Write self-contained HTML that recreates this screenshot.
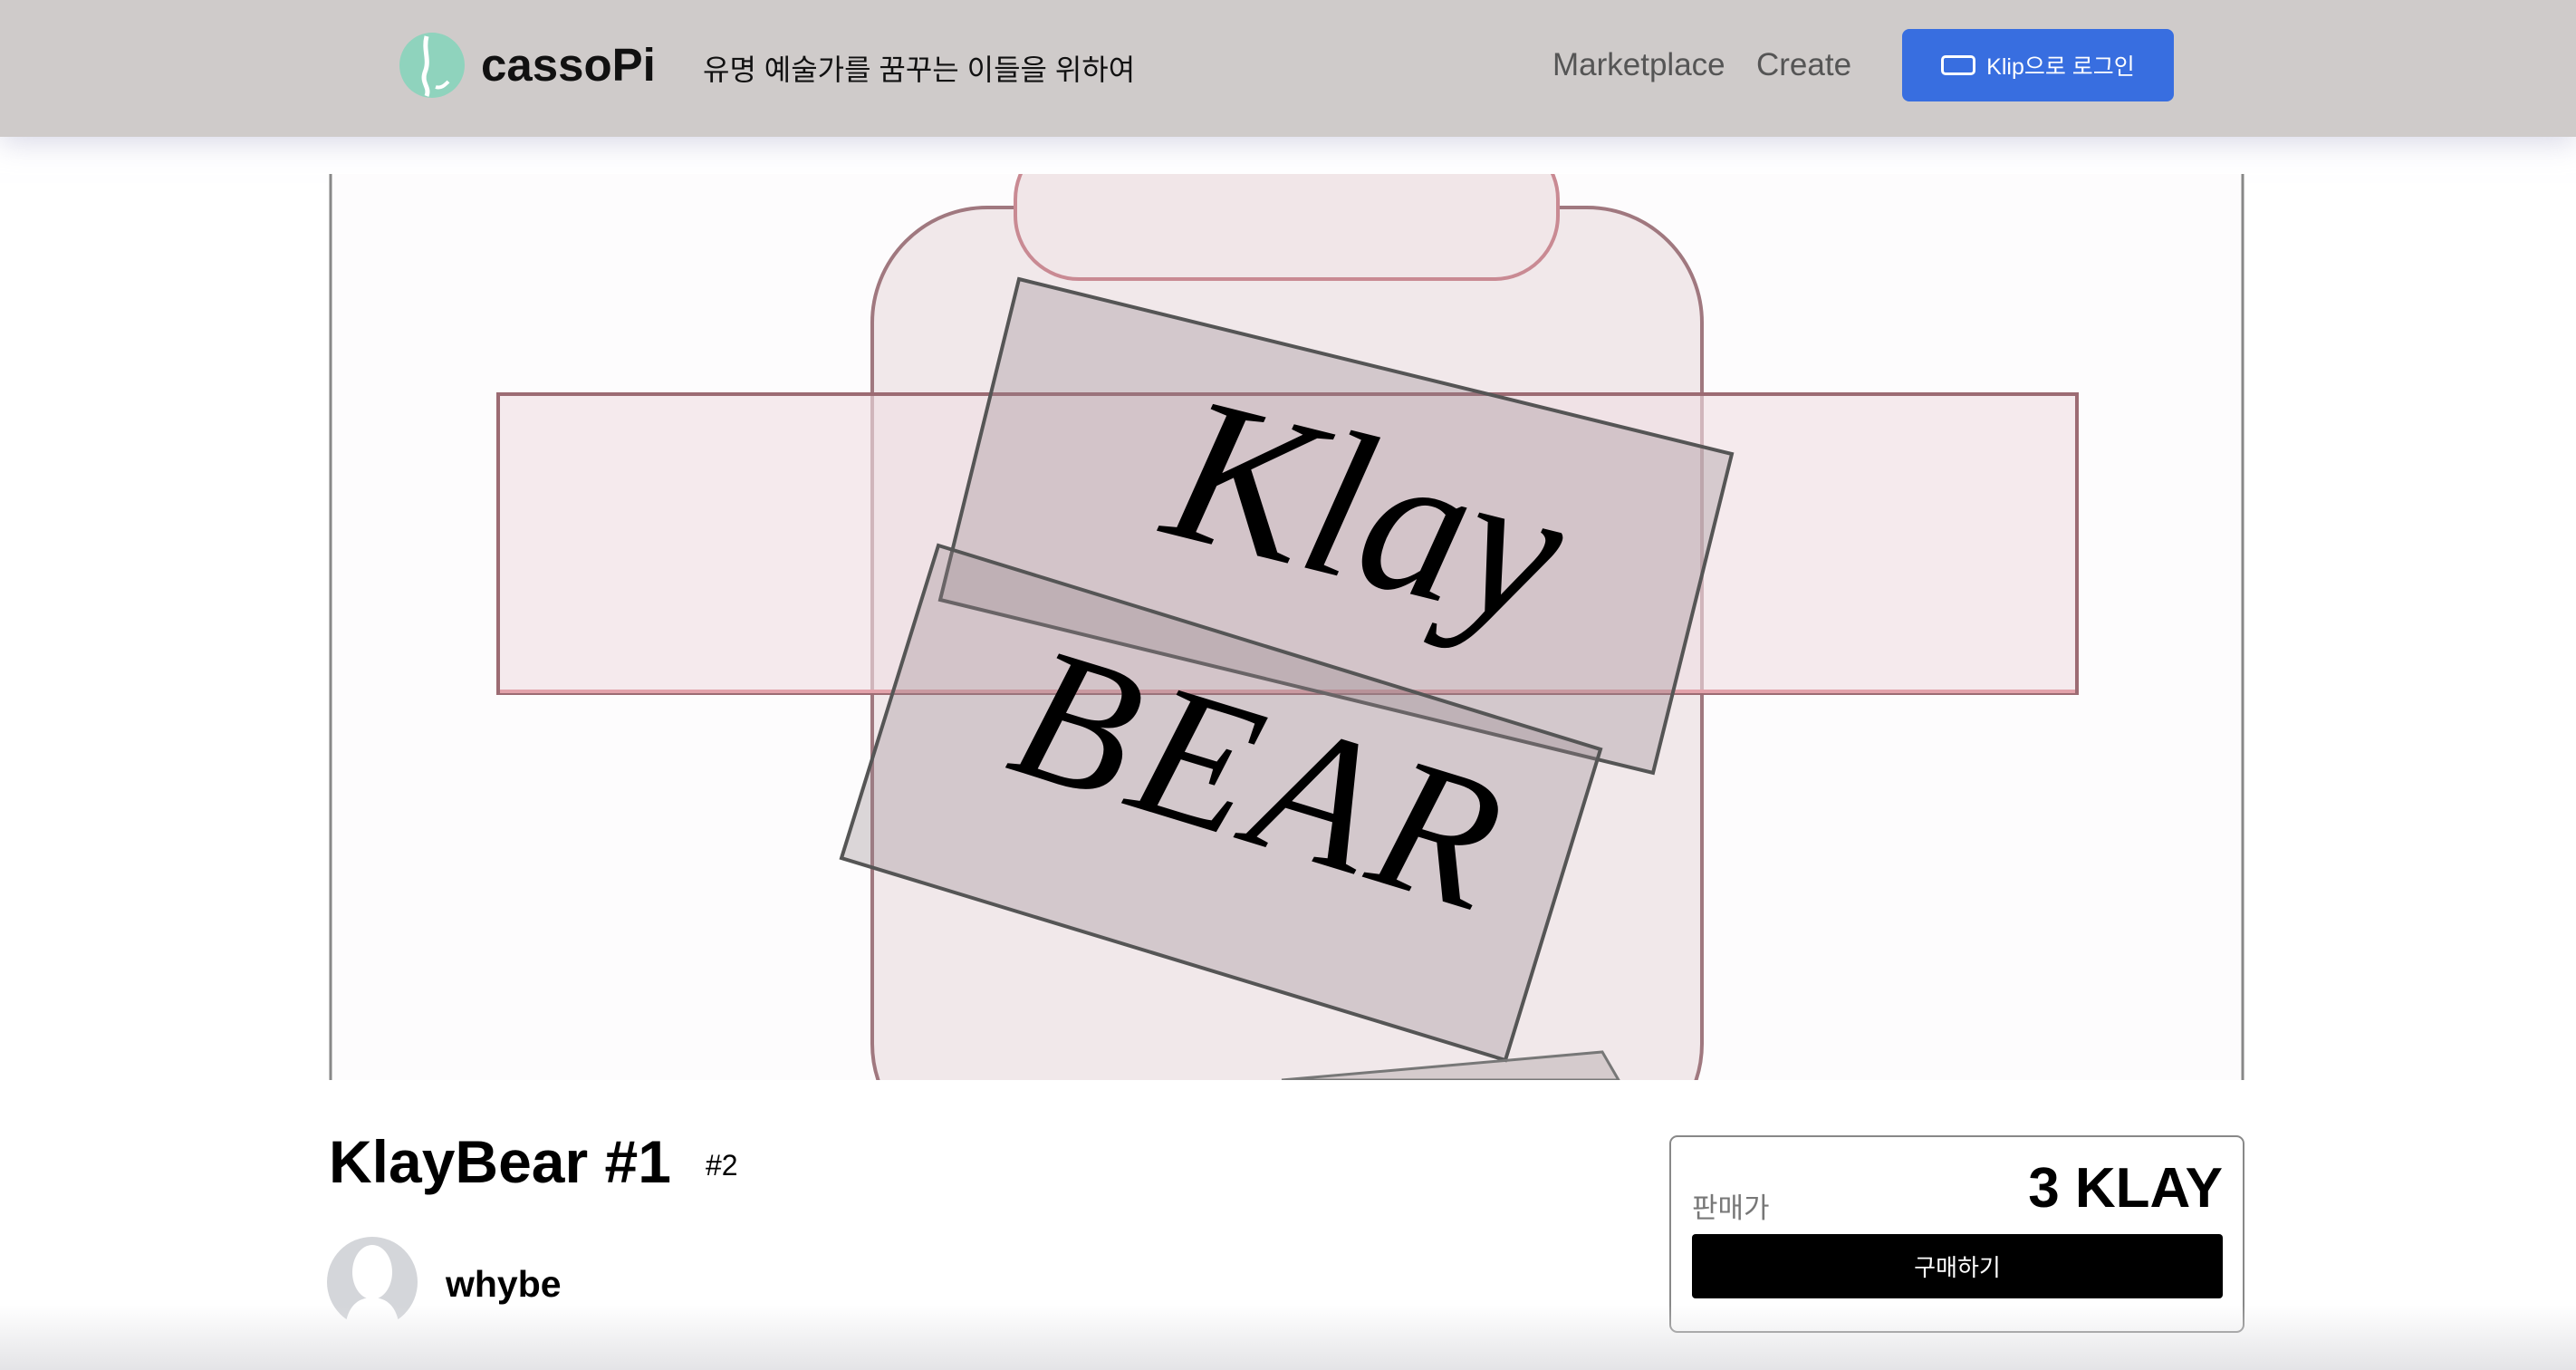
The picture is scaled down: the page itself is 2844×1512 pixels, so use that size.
<!DOCTYPE html>
<html><head><meta charset="utf-8"><style>
*{margin:0;padding:0;box-sizing:border-box}
body{width:2844px;height:1512px;background:#fff;font-family:"Liberation Sans","Noto Sans CJK KR",sans-serif;position:relative;overflow:hidden}
.hdr{position:absolute;left:0;top:0;width:2844px;height:151px;background:#cfcbca;box-shadow:0 6px 30px rgba(190,190,215,0.6)}
.abs{position:absolute;white-space:nowrap}
</style></head><body>
<div class="hdr">
  <svg class="abs" style="left:441px;top:36px" width="72" height="72" viewBox="0 0 72 72">
    <circle cx="36" cy="36" r="36" fill="#8fd3bd"/>
    <path d="M30 4 C26 20 34 30 28 44 C24 56 34 60 30 70" stroke="#fff" stroke-width="5" fill="none"/>
    <path d="M40 60 C46 62 50 58 54 54" stroke="#fff" stroke-width="4" fill="none"/>
  </svg>
  <div class="abs" style="left:531px;top:42px;font-size:51px;font-weight:bold;color:#111">cassoPi</div>
  <div class="abs" style="left:776px;top:52px;font-size:32px;color:#111">유명 예술가를 꿈꾸는 이들을 위하여</div>
  <div class="abs" style="left:1714px;top:52px;font-size:35px;color:#555">Marketplace</div>
  <div class="abs" style="left:1939px;top:52px;font-size:35px;color:#555">Create</div>
  <div class="abs" style="left:2100px;top:32px;width:300px;height:80px;background:#386ee0;border-radius:8px;color:#fff;font-size:25px;display:flex;align-items:center;justify-content:center">
    <span style="display:inline-block;width:38px;height:22px;border:3px solid #fff;border-radius:5px;margin-right:12px"></span>Klip으로 로그인</div>
</div>

<svg class="abs" style="left:363px;top:192px" width="2115" height="1000" viewBox="363 192 2115 1000">
  <rect x="363" y="192" width="2115" height="1000" fill="#fdfcfd"/>
  <line x1="365" y1="192" x2="365" y2="1192" stroke="#888" stroke-width="3"/>
  <line x1="2476" y1="192" x2="2476" y2="1192" stroke="#888" stroke-width="3"/>
  <rect x="963" y="229" width="916" height="1050" rx="127" fill="#f1e8ea" stroke="#a0787f" stroke-width="4"/>
  <rect x="1121" y="150" width="599" height="158" rx="70" fill="#f1e6e8" stroke="#c98a93" stroke-width="4"/>
  <rect x="550" y="435" width="1743" height="330" fill="rgba(240,222,226,0.6)" stroke="#9c6b73" stroke-width="4"/>
  <line x1="552" y1="763" x2="2291" y2="763" stroke="#e2a2aa" stroke-width="4"/>
  <polygon points="1125,308 1912,501 1825,853 1038,662" fill="rgba(150,135,140,0.32)" stroke="#555" stroke-width="4"/>
  <polygon points="1036,602 1767,827 1662,1170 929,947" fill="rgba(150,135,140,0.32)" stroke="#555" stroke-width="4"/>
  <polygon points="1415,1192 1769,1161 1787,1192" fill="rgba(150,135,140,0.3)" stroke="#777" stroke-width="3"/>
  <text x="1500" y="640" transform="rotate(14 1500 600)" text-anchor="middle" font-family="Liberation Serif" font-style="italic" font-size="230" fill="#000">Klay</text>
  <text x="1390" y="930" transform="rotate(17 1390 870)" text-anchor="middle" font-family="Liberation Serif" font-style="italic" font-size="210" fill="#000" letter-spacing="10">BEAR</text>
</svg>

<div class="abs" style="left:363px;top:1244px;font-size:66px;font-weight:bold;color:#000">KlayBear #1</div>
<div class="abs" style="left:779px;top:1268px;font-size:32px;color:#000">#2</div>
<svg class="abs" style="left:361px;top:1364px" width="100" height="102" viewBox="0 0 100 102">
  <circle cx="50" cy="51" r="50" fill="#d4d6da"/>
  <ellipse cx="50" cy="40" rx="22" ry="30" fill="#fff"/>
  <path d="M20 102 C22 78 34 68 50 68 C66 68 78 78 80 102Z" fill="#fff"/>
</svg>
<div class="abs" style="left:492px;top:1394px;font-size:41px;font-weight:bold;color:#000">whybe</div>

<div class="abs" style="left:1843px;top:1253px;width:635px;height:218px;border:2px solid #888;border-radius:9px"></div>
<div class="abs" style="left:1868px;top:1308px;font-size:31px;color:#777">판매가</div>
<div class="abs" style="left:2200px;top:1276px;width:254px;text-align:right;font-size:62px;font-weight:bold;color:#000">3 KLAY</div>
<div class="abs" style="left:1868px;top:1362px;width:586px;height:71px;background:#000;border-radius:4px;color:#fff;font-size:26px;display:flex;align-items:center;justify-content:center">구매하기</div>
<div class="abs" style="left:0;top:1440px;width:2844px;height:72px;background:linear-gradient(rgba(255,255,255,0),rgba(225,225,228,0.9));pointer-events:none"></div>
</body></html>
